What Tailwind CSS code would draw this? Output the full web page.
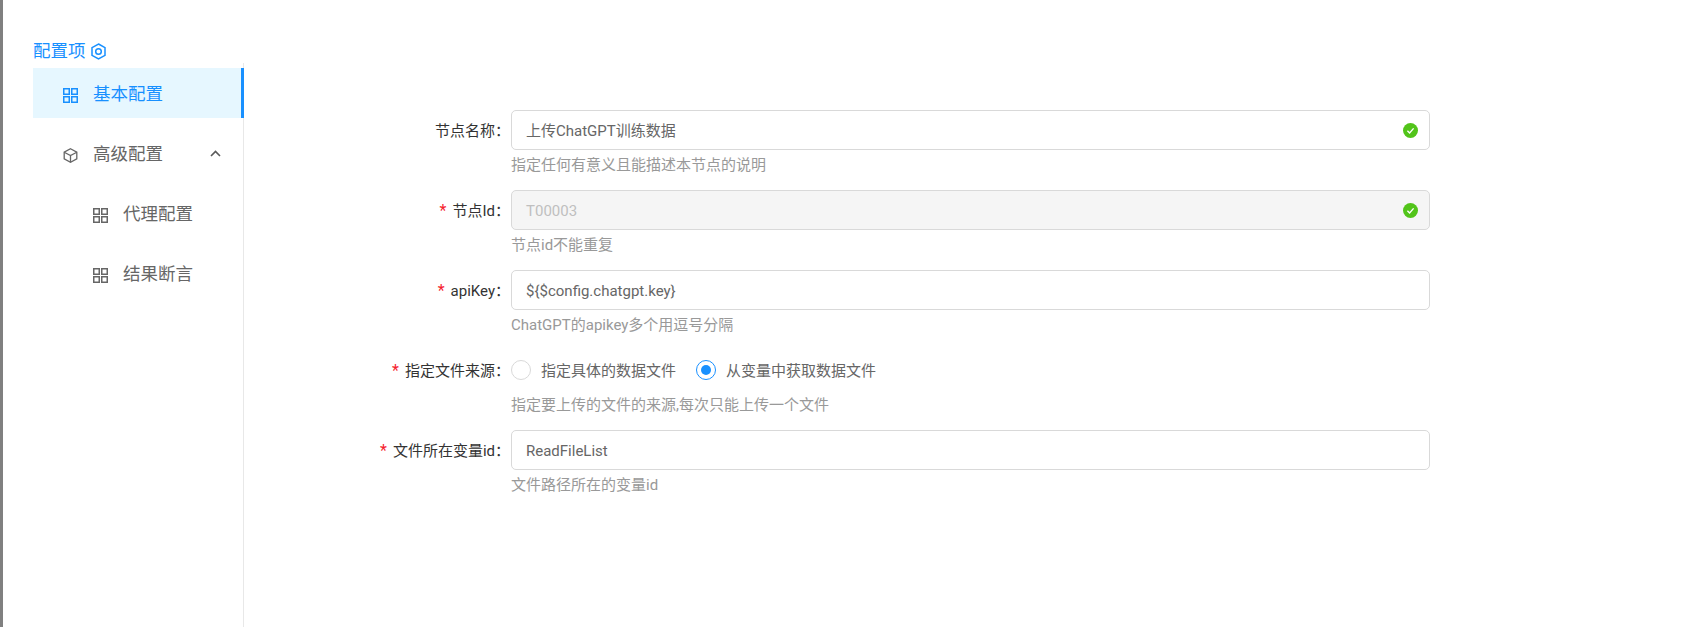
<!DOCTYPE html>
<html lang="zh-CN">
<head>
<meta charset="UTF-8">
<title>配置项</title>
<script src="https://cdn.jsdelivr.net/npm/@tailwindcss/browser@4"></script>
</head>
<body class="bg-white overflow-hidden font-['Roboto','Noto_Sans_CJK_SC',sans-serif]">
<div class="flex h-[627px] w-[1690px]">
  <div class="w-[3px] bg-[#808080]"></div>

  <!-- sidebar -->
  <aside class="ml-[30px] w-[211px] pt-[38px]">
    <div class="flex items-center h-[25px] pt-[2px] text-[17.5px] text-[#1890ff] leading-[25px]">
      配置项
      <svg class="ml-[5px] -mt-[1px] w-[15px] h-[17px]" viewBox="0 0 15 17" fill="none" stroke="#1890ff" stroke-width="1.5"><path d="M7.5 1 L14 4.7 V12.3 L7.5 16 L1 12.3 V4.7 Z"/><circle cx="7.5" cy="8.5" r="2.8"/></svg>
    </div>
    <nav class="border-r border-[#e8e8e8] h-[564px] pt-[5px] text-[17.5px] text-[#666666]">
      <div class="relative flex items-center h-[50px] pt-[2px] pl-[30px] bg-[#e6f7ff] text-[#1890ff]">
        <svg class="mt-[3px] w-[15px] h-[15px] mr-[15px]" viewBox="0 0 15 15" fill="none" stroke="currentColor" stroke-width="1.5"><rect x="0.75" y="0.75" width="5.5" height="5.5"/><rect x="8.75" y="0.75" width="5.5" height="5.5"/><rect x="0.75" y="8.75" width="5.5" height="5.5"/><rect x="8.75" y="8.75" width="5.5" height="5.5"/></svg>
        基本配置
        <span class="absolute right-[-1px] top-0 bottom-0 w-[3px] bg-[#1890ff]"></span>
      </div>
      <div class="flex items-center h-[50px] pt-[2px] mt-[10px] pl-[30px]">
        <svg class="mt-[3px] w-[15px] h-[15px] mr-[15px]" viewBox="0 0 15 15" fill="none" stroke="#666666" stroke-width="1.3"><path d="M7.5 0.8 L13.8 4.2 V10.8 L7.5 14.2 L1.2 10.8 V4.2 Z"/><path d="M1.2 4.2 L7.5 7.6 L13.8 4.2 M7.5 7.6 V14.2"/></svg>
        高级配置
        <svg class="ml-[47px] -mt-[2px] w-[11px] h-[7px]" viewBox="0 0 11 7" fill="none" stroke="#595959" stroke-width="1.6"><path d="M1 6 L5.5 1.5 L10 6"/></svg>
      </div>
      <div class="flex items-center h-[50px] pt-[2px] mt-[10px] pl-[60px]">
        <svg class="mt-[3px] w-[15px] h-[15px] mr-[15px]" viewBox="0 0 15 15" fill="none" stroke="currentColor" stroke-width="1.5"><rect x="0.75" y="0.75" width="5.5" height="5.5"/><rect x="8.75" y="0.75" width="5.5" height="5.5"/><rect x="0.75" y="8.75" width="5.5" height="5.5"/><rect x="8.75" y="8.75" width="5.5" height="5.5"/></svg>
        代理配置
      </div>
      <div class="flex items-center h-[50px] pt-[2px] mt-[10px] pl-[60px]">
        <svg class="mt-[3px] w-[15px] h-[15px] mr-[15px]" viewBox="0 0 15 15" fill="none" stroke="currentColor" stroke-width="1.5"><rect x="0.75" y="0.75" width="5.5" height="5.5"/><rect x="8.75" y="0.75" width="5.5" height="5.5"/><rect x="0.75" y="8.75" width="5.5" height="5.5"/><rect x="8.75" y="8.75" width="5.5" height="5.5"/></svg>
        结果断言
      </div>
    </nav>
  </aside>

  <!-- form -->
  <main class="pt-[110px] pl-[267px] text-[15px] flex flex-col gap-[16px]">
    <div class="flex">
      <label class="w-[267px] -ml-[267px] pr-[1px] pt-[2px] h-[40px] flex items-center justify-end text-[#333333]">节点名称：</label>
      <div>
        <div class="w-[919px] h-[40px] pt-[2px] pl-[14px] pr-[11px] flex items-center justify-between border border-[#d9d9d9] rounded-[5px] text-[#666666]">
          上传ChatGPT训练数据
          <svg class="-mt-[2px] w-[15px] h-[15px]" viewBox="0 0 15 15"><circle cx="7.5" cy="7.5" r="7.5" fill="#52c41a"/><path d="M4.4 7.7 L6.6 9.9 L10.6 5.4" fill="none" stroke="#fff" stroke-width="1.4"/></svg>
        </div>
        <p class="h-[24px] leading-[30px] text-[#999999]">指定任何有意义且能描述本节点的说明</p>
      </div>
    </div>
    <div class="flex">
      <label class="w-[267px] -ml-[267px] pr-[1px] pt-[2px] h-[40px] flex items-center justify-end text-[#333333]"><span class="text-[#f5222d] text-[16px] mr-[6px]">*</span>节点Id：</label>
      <div>
        <div class="w-[919px] h-[40px] pt-[2px] pl-[14px] pr-[11px] flex items-center justify-between border border-[#d9d9d9] rounded-[5px] bg-[#f5f5f5] text-[#bfbfbf]">
          T00003
          <svg class="-mt-[2px] w-[15px] h-[15px]" viewBox="0 0 15 15"><circle cx="7.5" cy="7.5" r="7.5" fill="#52c41a"/><path d="M4.4 7.7 L6.6 9.9 L10.6 5.4" fill="none" stroke="#fff" stroke-width="1.4"/></svg>
        </div>
        <p class="h-[24px] leading-[30px] text-[#999999]">节点id不能重复</p>
      </div>
    </div>
    <div class="flex">
      <label class="w-[267px] -ml-[267px] pr-[1px] pt-[2px] h-[40px] flex items-center justify-end text-[#333333]"><span class="text-[#f5222d] text-[16px] mr-[6px]">*</span>apiKey：</label>
      <div>
        <div class="w-[919px] h-[40px] pt-[2px] pl-[14px] pr-[11px] flex items-center border border-[#d9d9d9] rounded-[5px] text-[#666666]">${$config.chatgpt.key}</div>
        <p class="h-[24px] leading-[30px] text-[#999999]">ChatGPT的apikey多个用逗号分隔</p>
      </div>
    </div>
    <div class="flex">
      <label class="w-[267px] -ml-[267px] pr-[1px] pt-[2px] h-[40px] flex items-center justify-end text-[#333333]"><span class="text-[#f5222d] text-[16px] mr-[6px]">*</span>指定文件来源：</label>
      <div>
        <div class="w-[919px] h-[40px] pt-[2px] flex items-center text-[#666666]">
          <span class="-mt-[2px] w-[20px] h-[20px] rounded-full border border-[#d9d9d9] mr-[10px]"></span>
          指定具体的数据文件
          <span class="-mt-[2px] w-[20px] h-[20px] rounded-full border border-[#1890ff] ml-[20px] mr-[10px] flex items-center justify-center"><span class="w-[10px] h-[10px] rounded-full bg-[#1890ff]"></span></span>
          从变量中获取数据文件
        </div>
        <p class="h-[24px] leading-[30px] text-[#999999]">指定要上传的文件的来源,每次只能上传一个文件</p>
      </div>
    </div>
    <div class="flex">
      <label class="w-[267px] -ml-[267px] pr-[1px] pt-[2px] h-[40px] flex items-center justify-end text-[#333333]"><span class="text-[#f5222d] text-[16px] mr-[6px]">*</span>文件所在变量id：</label>
      <div>
        <div class="w-[919px] h-[40px] pt-[2px] pl-[14px] pr-[11px] flex items-center border border-[#d9d9d9] rounded-[5px] text-[#666666]">ReadFileList</div>
        <p class="h-[24px] leading-[30px] text-[#999999]">文件路径所在的变量id</p>
      </div>
    </div>
  </main>
</div>
</body>
</html>
